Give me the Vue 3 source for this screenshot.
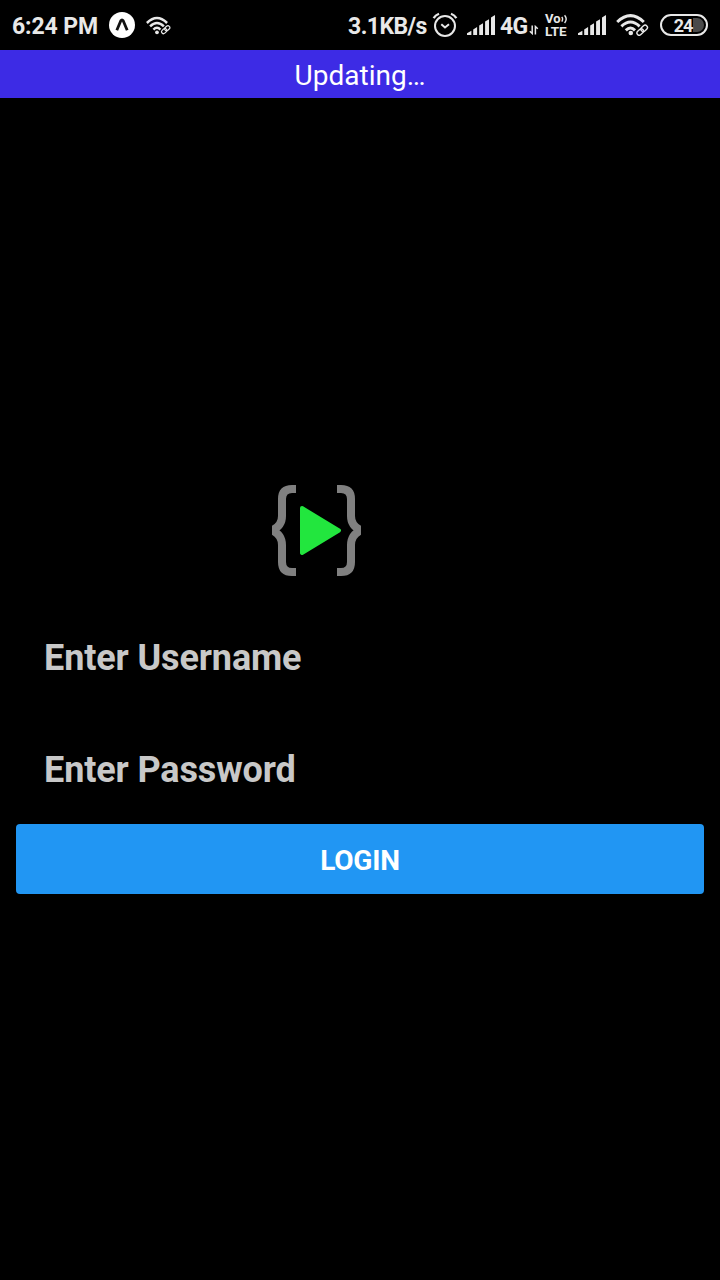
<script setup>
const bars = [
  'M0 20 V18.2 L4.4 15.8 V20 Z',
  'M6.2 14.4 L10.1 12 V20 H6.2 Z',
  'M12.2 10.6 L16 8.2 V20 H12.2 Z',
  'M18.1 6.6 L22 4.2 V20 H18.1 Z',
  'M24 2.4 L28 0 V20 H24 Z',
].join(' ')
</script>

<template>
  <div class="screen">
    <header class="status">
      <span class="clock">6:24 PM</span>
      <svg class="expo" width="26" height="26" viewBox="0 0 26 26">
        <circle cx="13" cy="13" r="13" fill="#fff" />
        <path d="M7.8 18.3 L11.8 8.8 Q13 6.8 14.2 8.8 L18.2 18.3" fill="none" stroke="#111" stroke-width="2.8" stroke-linejoin="round" />
      </svg>
      <svg class="wifi-small" width="25" height="19" viewBox="0 0 33 24">
        <g fill="none" stroke="#e8e8e8" stroke-width="3.3">
          <path d="M1.2 8.7 Q14.5 -4.5 27.8 8.7" />
          <path d="M5.4 13.1 Q14.5 4.3 23.6 13.1" />
          <path d="M9.8 17.3 Q14.5 12.6 19 17.3" />
        </g>
        <circle cx="14.5" cy="21" r="2.5" fill="#e8e8e8" />
        <path d="M22 22 L31 14" stroke="#000" stroke-width="5" />
        <g fill="none" stroke="#e8e8e8" stroke-width="1.6" transform="rotate(-43 26 17.5)">
          <rect x="19.5" y="15" width="7.5" height="5" rx="2.5" />
          <rect x="25" y="15" width="7.5" height="5" rx="2.5" />
        </g>
      </svg>

      <span class="speed">3.1KB/s</span>
      <svg class="alarm" width="26" height="26" viewBox="0 0 26 26" fill="none" stroke="#e8e8e8" stroke-width="2">
        <circle cx="13" cy="14" r="10" />
        <path d="M9.3 12.2 L13 15.5 L17 12.2" />
        <path d="M1.6 6.2 Q3.5 3.2 7 1.8 M19 1.8 Q22.5 3.2 24.4 6.2" stroke-width="2.3" />
      </svg>
      <svg class="bars-a" width="28" height="20" viewBox="0 0 28 20"><path :d="bars" fill="#e8e8e8" /></svg>
      <span class="network">4G</span>
      <svg class="arrows" width="10" height="10" viewBox="0 0 10 10" fill="none" stroke="#e8e8e8" stroke-width="1.5">
        <path d="M3.2 0.5 V8.5 L0.8 6.3 M6.4 9.5 V1.5 L8.8 3.7" />
      </svg>
      <span class="volte">
        <span class="vo">Vo<svg width="7" height="10" viewBox="0 0 7 10" fill="none" stroke="#e8e8e8" stroke-width="1.4"><path d="M0.8 2.8 Q2.4 5 0.8 7.6 M3.6 1.2 Q6.8 5 3.6 9" /></svg></span>
        <span class="lte">LTE</span>
      </span>
      <svg class="bars-b" width="28" height="20" viewBox="0 0 28 20"><path :d="bars" fill="#e8e8e8" /></svg>
      <svg class="wifi" width="33" height="22" viewBox="0 0 33 22">
        <g fill="none" stroke="#e8e8e8" stroke-width="3">
          <path d="M1.2 8 Q14.5 -4.6 27.8 8" />
          <path d="M5.4 12.3 Q14.5 3.8 23.6 12.3" />
          <path d="M9.8 16.4 Q14.5 11.8 19 16.4" />
        </g>
        <circle cx="14.8" cy="19" r="2.3" fill="#e8e8e8" />
        <path d="M22 20.5 L31 12.5" stroke="#000" stroke-width="5" />
        <g fill="none" stroke="#e8e8e8" stroke-width="1.4" transform="rotate(-43 26.2 16.2)">
          <rect x="19.9" y="13.9" width="7.2" height="4.6" rx="2.3" />
          <rect x="25.3" y="13.9" width="7.2" height="4.6" rx="2.3" />
        </g>
      </svg>
      <span class="battery"><span class="level">24</span></span>
    </header>

    <div class="banner">Updating…</div>

    <main class="login">
      <svg class="logo" width="89" height="92" viewBox="0 0 89 92">
        <g fill="none" stroke="#808080" stroke-width="8">
          <path d="M24 4 H20 Q10 4 10 14 V31 Q10 41 0 45.3 Q10 49.6 10 60 V77 Q10 87 20 87 H24" />
          <path d="M65 4 H69 Q79 4 79 14 V31 Q79 41 89 45.3 Q79 49.6 79 60 V77 Q79 87 69 87 H65" />
        </g>
        <path d="M30 23 L67 45.5 L30 68 Z" fill="#22e63e" stroke="#22e63e" stroke-width="4" stroke-linejoin="round" />
      </svg>
      <div class="field">Enter Username</div>
      <div class="field">Enter Password</div>
      <button class="submit" type="button">LOGIN</button>
    </main>
  </div>
</template>

<style>
body { background: #000; }
</style>

<style scoped>
.screen {
  width: 720px;
  height: 1280px;
  overflow: hidden;
  background: #000;
  font-family: Roboto, "Liberation Sans", sans-serif;
}
.status {
  display: flex;
  align-items: flex-start;
  height: 50px;
  color: #e8e8e8;
  font-weight: 700;
  white-space: nowrap;
}
.status > * { flex: none; }
.clock {
  width: 97px;
  margin-top: 13px;
  padding-left: 12px;
  box-sizing: border-box;
  font-size: 23px;
  line-height: 28px;
  letter-spacing: -0.1px;
}
.expo { margin: 12px 0 0 12px; }
.wifi-small { margin: 16px 0 0 11px; }
.speed {
  width: 84px;
  margin: 13px 0 0 177px;
  font-size: 23px;
  line-height: 28px;
  letter-spacing: -0.55px;
}
.alarm { margin-top: 12px; }
.bars-a { margin: 15px 0 0 9px; }
.network {
  width: 29px;
  margin: 13px 0 0 5px;
  font-size: 23px;
  line-height: 28px;
  letter-spacing: -0.6px;
}
.arrows { margin-top: 25px; }
.volte {
  display: flex;
  flex-direction: column;
  width: 24px;
  margin: 13px 0 0 6px;
  font-size: 13px;
  line-height: 12px;
}
.vo {
  display: flex;
  align-items: center;
  height: 12px;
}
.lte {
  font-size: 13.5px;
  letter-spacing: -0.1px;
}
.bars-b { margin: 15px 0 0 9px; }
.wifi { margin: 14px 0 0 10px; }
.battery {
  box-sizing: border-box;
  width: 48px;
  height: 22px;
  margin: 14px 0 0 11px;
  padding: 2px;
  border: 2px solid #e8e8e8;
  border-radius: 11px;
}
.level {
  display: block;
  height: 14px;
  padding-right: 2px;
  border-radius: 7px;
  background: linear-gradient(90deg, #000 29px, #4a4a4a 29px);
  text-align: center;
  font-size: 18px;
  line-height: 15px;
  letter-spacing: -1px;
}
.banner {
  height: 48px;
  background: #3d2be5;
  color: #fff;
  font-size: 28px;
  line-height: 51px;
  text-align: center;
}
.login {
  display: flex;
  flex-direction: column;
  padding: 387px 16px 0;
}
.logo { margin-left: 256px; }
.field {
  height: 112px;
  padding-left: 28px;
  color: #c8c8c8;
  font-size: 36px;
  font-weight: 700;
  line-height: 116px;
  letter-spacing: -0.12px;
}
.logo + .field { margin-top: 23px; }
.submit {
  height: 70px;
  margin: 0;
  padding: 3px 0 0;
  border: 0;
  border-radius: 4px;
  background: #2196f3;
  color: #fff;
  font: 700 28px/40px Roboto, "Liberation Sans", sans-serif;
  letter-spacing: -0.2px;
}
</style>
